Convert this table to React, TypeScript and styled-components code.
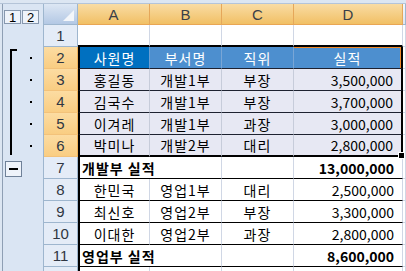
import React from 'react';
import styled, { createGlobalStyle } from 'styled-components';

const Global = createGlobalStyle`
  html, body { margin: 0; padding: 0; background: #ffffff; }
  body {
    width: 406px; height: 271px; overflow: hidden;
    font-family: "Noto Sans CJK KR", "Noto Sans", sans-serif;
  }
`;

const COLS = '41px 34px 72px 72px 72px 109px 1fr';

const Frame = styled.div`
  display: flex; flex-direction: column;
  width: 406px; height: 271px; overflow: hidden; background: #fff;
`;
const TopStrip = styled.div`
  flex: none; height: 4px; box-sizing: border-box;
  background: #DCE6F2; border-bottom: 1px solid #B4C4D8;
`;
const Body = styled.div`
  display: flex; flex: 1; min-height: 0;
`;
const LeftEdge = styled.div`
  flex: none; width: 3px; box-sizing: border-box;
  background: #DCE6F2; border-right: 1px solid #8E9FB4;
`;
const Grid = styled.div`
  flex: 1; display: flex; flex-direction: column; min-width: 0;
`;
const Row = styled.div<{ $h?: number }>`
  flex: none; display: grid; grid-template-columns: ${COLS};
  height: ${p => p.$h ?? 22}px;
`;

/* ---------- header row ---------- */
const OutlineHead = styled.div`
  box-sizing: border-box; display: flex; align-items: flex-end; gap: 1px;
  padding: 0 0 1px 1px;
  background: #DAE5F3; border-right: 1px solid #9EB6CE;
`;
const LevelButton = styled.div`
  box-sizing: border-box; width: 17px; height: 14px;
  display: flex; align-items: center; justify-content: center;
  border: 1px solid #8798AE; background: #EEF3FA;
  font: 13px "Liberation Sans", Arial, sans-serif; color: #000;
`;
const Corner = styled.div`
  position: relative; box-sizing: border-box;
  background: linear-gradient(#DDE7F4, #B3C8E4);
  border-right: 1px solid #9EB6CE; border-bottom: 1px solid #9EB6CE;
  &::after {
    content: ''; position: absolute; right: 3px; bottom: 3px;
    width: 0; height: 0;
    border-left: 11px solid transparent;
    border-bottom: 11px solid #F3F6FA;
  }
`;
const ColHead = styled.div<{ $sel?: boolean }>`
  box-sizing: border-box; display: flex; align-items: center; justify-content: center;
  background: ${p => p.$sel ? 'linear-gradient(#F9DCA4, #F1C065)' : 'linear-gradient(#F4F7FB, #DCE6F4)'};
  border-right: 1px solid ${p => p.$sel ? '#E5A75A' : '#9EB6CE'};
  border-bottom: 1px solid ${p => p.$sel ? '#E9A654' : '#9EB6CE'};
  font: 15px "Liberation Sans", Arial, sans-serif; color: #3A3F47;
`;

/* ---------- body ---------- */
const OutlineCell = styled.div`
  box-sizing: border-box; background: #DAE5F3; border-right: 1px solid #9EB6CE;
  display: flex;
`;
const RowHead = styled.div<{ $sel?: boolean }>`
  box-sizing: border-box; display: flex; align-items: center; justify-content: center;
  background: ${p => p.$sel ? 'linear-gradient(#FCDCA2, #F9CD82)' : '#E4ECF7'};
  border-right: 1px solid ${p => p.$sel ? '#F0B25A' : '#9EB6CE'};
  border-bottom: 1px solid ${p => p.$sel ? '#F3C27A' : '#9EB6CE'};
  font: 15px "Liberation Sans", Arial, sans-serif; color: #2F3642;
`;

type Align = 'left' | 'center' | 'right';
const Cell = styled.div<{
  $bg?: string; $align?: Align; $bold?: boolean; $color?: string;
  $bb?: string; $bbw?: number; $bl?: boolean; $br?: boolean; $span?: number;
  $gl?: string; $ls?: number; $handle?: boolean; $mark?: boolean;
}>`
  position: relative; box-sizing: border-box; min-width: 0;
  display: flex; align-items: center;
  justify-content: ${p => p.$align === 'left' ? 'flex-start' : p.$align === 'right' ? 'flex-end' : 'center'};
  padding: ${p => p.$align === 'left' ? '0 0 0 2px' : p.$align === 'right' ? '0 8px 0 0' : '0'};
  grid-column: span ${p => p.$span ?? 1};
  background: ${p => p.$bg ?? '#ffffff'};
  color: ${p => p.$color ?? '#000'};
  font-family: "Noto Sans CJK KR", "Noto Sans", sans-serif;
  font-size: 14px; line-height: 1;
  font-weight: ${p => p.$bold ? 700 : 400};
  letter-spacing: ${p => p.$ls ?? 0}px;
  white-space: nowrap;
  border-left: ${p => p.$bl ? '2px solid #000' : 'none'};
  border-right: ${p => p.$br ? '2px solid #000' : `1px solid ${p.$gl ?? '#D0D7E5'}`};
  border-bottom: ${p => `${p.$bbw ?? 1}px solid ${p.$bb ?? '#D0D7E5'}`};
  ${p => p.$mark ? 'box-shadow: inset 0 1px 0 #EE8A2A, inset -1px 0 0 #EE8A2A;' : ''}
  ${p => p.$handle ? `
    z-index: 2; overflow: visible;
    &::after {
      content: ''; position: absolute; right: -4px; bottom: -4px;
      width: 5px; height: 5px; background: #000; border: 1px solid #fff;
    }` : ''}
`;

type OutlineKind = 'none' | 'start' | 'mid' | 'end' | 'minus';

function OutlineMark({ kind }: { kind: OutlineKind }) {
  if (kind === 'none') return <OutlineCell />;
  if (kind === 'minus') {
    return (
      <OutlineCell>
        <svg width="40" height="22" viewBox="0 0 40 22">
          <rect x="2.5" y="4.5" width="16" height="15" fill="#EEF3FA" stroke="#6F8198" />
          <rect x="6" y="11" width="9" height="2" fill="#000" />
        </svg>
      </OutlineCell>
    );
  }
  const y1 = kind === 'start' ? 2 : 0;
  const y2 = kind === 'end' ? 20 : 22;
  return (
    <OutlineCell>
      <svg width="40" height="22" viewBox="0 0 40 22">
        <rect x="7" y={y1} width="2" height={y2 - y1} fill="#000" />
        {kind === 'start' && <rect x="7" y="2" width="7" height="2" fill="#000" />}
        <rect x="27" y="10" width="2" height="2" fill="#000" />
      </svg>
    </OutlineCell>
  );
}

type Line = {
  n: number; outline: OutlineKind; sel?: boolean;
  kind: 'blank' | 'head' | 'item' | 'total';
  a?: string; b?: string; c?: string; d?: string;
  dark?: boolean; last?: boolean;
};

const lines: Line[] = [
  { n: 1, outline: 'none', kind: 'blank' },
  { n: 2, outline: 'start', sel: true, kind: 'head', a: '사원명', b: '부서명', c: '직위', d: '실적' },
  { n: 3, outline: 'mid', sel: true, kind: 'item', a: '홍길동', b: '개발1부', c: '부장', d: '3,500,000', dark: true },
  { n: 4, outline: 'mid', sel: true, kind: 'item', a: '김국수', b: '개발1부', c: '부장', d: '3,700,000', dark: true },
  { n: 5, outline: 'mid', sel: true, kind: 'item', a: '이겨레', b: '개발1부', c: '과장', d: '3,000,000', dark: true },
  { n: 6, outline: 'end', sel: true, kind: 'item', a: '박미나', b: '개발2부', c: '대리', d: '2,800,000', dark: true, last: true },
  { n: 7, outline: 'minus', kind: 'total', a: '개발부 실적', d: '13,000,000' },
  { n: 8, outline: 'none', kind: 'item', a: '한민국', b: '영업1부', c: '대리', d: '2,500,000' },
  { n: 9, outline: 'none', kind: 'item', a: '최신호', b: '영업2부', c: '부장', d: '3,300,000' },
  { n: 10, outline: 'none', kind: 'item', a: '이대한', b: '영업2부', c: '과장', d: '2,800,000' },
  { n: 11, outline: 'none', kind: 'total', a: '영업부 실적', d: '8,600,000' },
];

const SHADE = '#E7E8F3';
const SHADE_GRID = '#C7CCDA';
const ROW_LINE = '#1E2230';

function SheetRow({ l }: { l: Line }) {
  const lead = (
    <>
      <OutlineMark kind={l.outline} />
      <RowHead $sel={l.sel}>{l.n}</RowHead>
    </>
  );

  if (l.kind === 'blank') {
    return (
      <Row>
        {lead}
        <Cell $bb="#000" $bbw={2} />
        <Cell $bb="#000" $bbw={2} />
        <Cell $bb="#000" $bbw={2} />
        <Cell $bb="#000" $bbw={2} />
        <Cell />
      </Row>
    );
  }

  if (l.kind === 'head') {
    return (
      <Row>
        {lead}
        <Cell $bl $bg="#0070C0" $color="#fff" $ls={1} $bb={ROW_LINE} $gl="#6C9FD3">{l.a}</Cell>
        <Cell $bg="#4D8FCF" $color="#fff" $ls={1} $bb={ROW_LINE} $gl="#79A6D6">{l.b}</Cell>
        <Cell $bg="#4D8FCF" $color="#fff" $ls={1} $bb={ROW_LINE} $gl="#79A6D6">{l.c}</Cell>
        <Cell $br $mark $bg="#4D8FCF" $color="#fff" $ls={1} $bb={ROW_LINE}>{l.d}</Cell>
        <Cell />
      </Row>
    );
  }

  if (l.kind === 'total') {
    return (
      <Row>
        {lead}
        <Cell $bl $span={2} $align="left" $bold $ls={1} $bb="#000">{l.a}</Cell>
        <Cell $bb="#000" />
        <Cell $align="right" $bold $bb="#000">{l.d}</Cell>
        <Cell />
      </Row>
    );
  }

  const bg = l.dark ? SHADE : '#fff';
  const gl = l.dark ? SHADE_GRID : '#D0D7E5';
  const bb = l.last ? '#000' : l.dark ? ROW_LINE : '#000';
  const bbw = l.last ? 2 : 1;
  return (
    <Row>
      {lead}
      <Cell $bl $bg={bg} $gl={gl} $ls={1} $bb={bb} $bbw={bbw}>{l.a}</Cell>
      <Cell $bg={bg} $gl={gl} $ls={1} $bb={bb} $bbw={bbw}>{l.b}</Cell>
      <Cell $bg={bg} $gl={gl} $ls={1} $bb={bb} $bbw={bbw}>{l.c}</Cell>
      <Cell $align="right" $bg={bg} $br={l.dark} $handle={l.last} $bb={bb} $bbw={bbw}>{l.d}</Cell>
      <Cell />
    </Row>
  );
}

export default function App() {
  return (
    <>
      <Global />
      <Frame>
        <TopStrip />
        <Body>
          <LeftEdge />
          <Grid>
            <Row $h={21}>
              <OutlineHead>
                <LevelButton>1</LevelButton>
                <LevelButton>2</LevelButton>
              </OutlineHead>
              <Corner />
              <ColHead $sel>A</ColHead>
              <ColHead $sel>B</ColHead>
              <ColHead $sel>C</ColHead>
              <ColHead $sel>D</ColHead>
              <ColHead />
            </Row>
            {lines.map(l => <SheetRow key={l.n} l={l} />)}
            <Row>
              <OutlineMark kind="none" />
              <RowHead />
              <Cell $bl />
              <Cell />
              <Cell />
              <Cell />
              <Cell />
            </Row>
          </Grid>
        </Body>
      </Frame>
    </>
  );
}
